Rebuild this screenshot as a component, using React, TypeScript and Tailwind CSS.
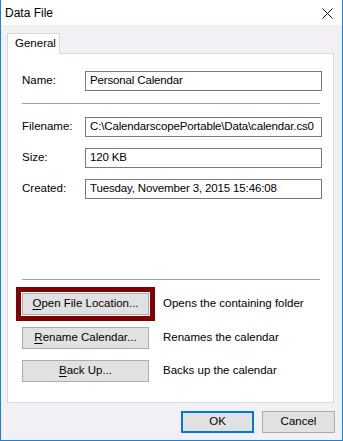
const font = { fontFamily: '"Liberation Sans", Arial, sans-serif' };

function Field({ label, value }: { label: string; value: string }) {
  return (
    <div className="flex items-center h-[20px]">
      <div className="w-[63px] shrink-0 text-[11.5px] text-black">{label}</div>
      <div className="w-[237px] h-[20px] border border-[#7a7a7a] bg-white flex items-center pl-[4px] text-[11.5px] tracking-[-0.15px] text-black whitespace-nowrap overflow-hidden">
        {value}
      </div>
    </div>
  );
}

function Btn({ mn, rest }: { mn: string; rest: string }) {
  return (
    <div className="w-[127px] h-[22px] shrink-0 border border-[#adadad] bg-[#e1e1e1] flex items-center justify-center text-[11.5px] text-black">
      <span>
        <span className="underline underline-offset-2">{mn}</span>
        {rest}
      </span>
    </div>
  );
}

export default function App() {
  return (
    <div
      className="w-[343px] h-[441px] flex flex-col border-x border-b border-[#1a82d6] bg-[#f2f0f4]"
      style={font}
    >
      {/* title bar */}
      <div className="h-[25px] shrink-0 bg-white flex items-center justify-between pl-[4px] pr-[9px]">
        <span className="text-[12px] text-black">Data File</span>
        <svg width="11" height="11" viewBox="0 0 11 11" className="mt-[1px]">
          <path d="M0.5 0.5 L10.5 10.5 M10.5 0.5 L0.5 10.5" stroke="#111" strokeWidth="1" fill="none" />
        </svg>
      </div>

      <div className="flex flex-col pt-[8px] pl-[6px] pr-[8px]">
        {/* tab */}
        <div className="flex">
          <div className="w-[53px] h-[21px] border border-b-0 border-[#d9d9d9] bg-white pl-[7px] flex items-center text-[11.5px] text-black -mb-px relative z-10">
            General
          </div>
        </div>

        {/* panel */}
        <div className="w-[327px] h-[350px] border border-[#d9d9d9] bg-white flex flex-col pl-[14px] pt-[17px]">
          <Field label="Name:" value="Personal Calendar" />
          <div className="mt-[12px] w-[298px] h-px bg-[#a0a0a0]" />
          <div className="mt-[13px]">
            <Field label="Filename:" value="C:\CalendarscopePortable\Data\calendar.cs0" />
          </div>
          <div className="mt-[11px]">
            <Field label="Size:" value="120 KB" />
          </div>
          <div className="mt-[11px]">
            <Field label="Created:" value="Tuesday, November 3, 2015 15:46:08" />
          </div>
          <div className="mt-[80px] w-[298px] h-px bg-[#a0a0a0]" />

          <div className="mt-[13px] flex items-center">
            <div className="-m-[6px] border-[5px] border-[#7f0000] p-px">
              <Btn mn="O" rest="pen File Location..." />
            </div>
            <span className="ml-[14px] text-[11.5px] text-black">Opens the containing folder</span>
          </div>
          <div className="mt-[12px] flex items-center">
            <Btn mn="R" rest="ename Calendar..." />
            <span className="ml-[14px] text-[11.5px] text-black">Renames the calendar</span>
          </div>
          <div className="mt-[11px] flex items-center">
            <Btn mn="B" rest="ack Up..." />
            <span className="ml-[14px] text-[11.5px] text-black">Backs up the calendar</span>
          </div>
        </div>

        {/* footer */}
        <div className="mt-[8px] flex justify-end gap-[8px] -mr-[1px]">
          <div className="w-[73px] h-[22px] border-2 border-[#0078d7] bg-[#e1e1e1] flex items-center justify-center text-[11.5px] text-black">
            OK
          </div>
          <div className="w-[73px] h-[22px] border border-[#adadad] bg-[#e1e1e1] flex items-center justify-center text-[11.5px] text-black">
            Cancel
          </div>
        </div>
      </div>
    </div>
  );
}
